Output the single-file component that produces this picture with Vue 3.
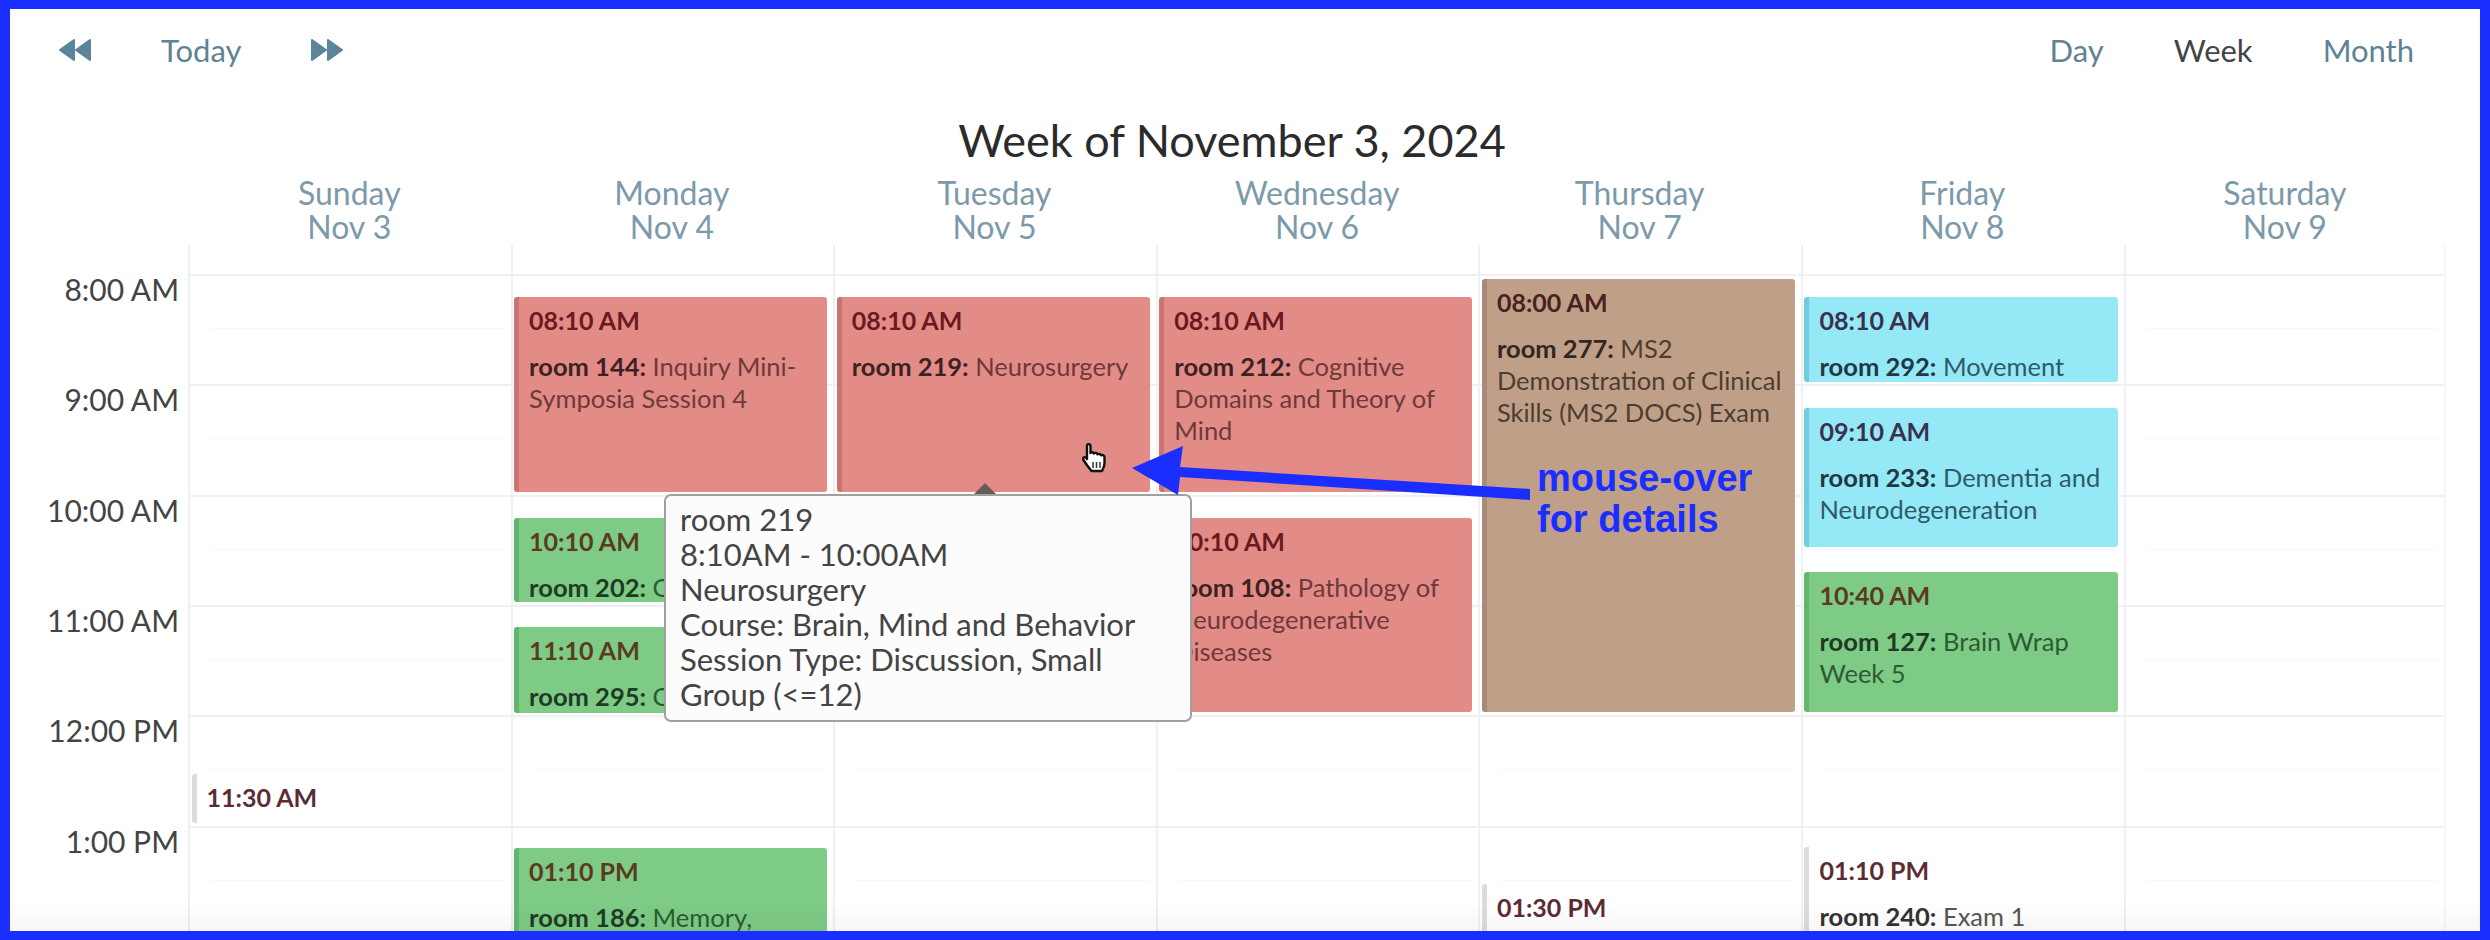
<template>
  <div class="page">
    <header class="nav">
      <div class="nav-group">
        <svg class="skip" viewBox="0 0 32 22"><path d="M1 11 15 1v20zM17 11 31 1v20z" /></svg>
        <a class="nav-link">Today</a>
        <svg class="skip" viewBox="0 0 32 22"><path d="M31 11 17 1v20zM15 11 1 1v20z" /></svg>
      </div>
      <div class="nav-group views">
        <a class="nav-link">Day</a>
        <a class="nav-link active">Week</a>
        <a class="nav-link">Month</a>
      </div>
    </header>

    <h1 class="title">Week of November 3, 2024</h1>

    <div class="head-row">
      <div></div>
      <div v-for="d in days" :key="d.name" class="day-head">
        {{ d.name }}<br />{{ d.date }}
      </div>
    </div>

    <div class="grid">
      <div class="hours">
        <div v-for="h in hours" :key="h" class="hour">{{ h }}</div>
      </div>
      <div v-for="d in days" :key="d.name" class="col">
        <div v-for="s in 7" :key="s" class="slot"></div>
        <div
          v-for="e in d.events"
          :key="e.time"
          class="event"
          :class="e.kind"
          :style="{ top: e.top + 'px', height: e.height + 'px' }"
        >
          <div class="time">{{ e.time }}</div>
          <div v-if="e.room" class="desc"><b>room {{ e.room }}:</b> {{ e.title }}</div>
        </div>
      </div>
    </div>

    <!-- hover tooltip -->
    <div class="tooltip">
      <span class="tip-arrow"></span>
      room 219<br />
      8:10AM - 10:00AM<br />
      Neurosurgery<br />
      Course: Brain, Mind and Behavior<br />
      Session Type: Discussion, Small Group (&lt;=12)
    </div>

    <svg class="cursor" viewBox="0 0 27 30">
      <path
        d="M5 3c0-2.500 3.500-2.500 3.500 0v7c1-1.300 3-1 3.500.5 1-1 3-.8 3.500.8 1-.8 3-.4 3.500 1 1.500-.8 3.500 0 3.500 2v6c0 3-1 5-2.500 7.700H9.500C7 25 4 21 1.500 17c-1.200-2 1-3.800 2.700-2.200L5 16z"
        fill="#fff"
        stroke="#111"
        stroke-width="2.400"
        stroke-linejoin="round"
      />
      <path d="M11 19v6M14.500 19v6M18 19v6" stroke="#333" stroke-width="1.500" fill="none" />
    </svg>

    <!-- annotation -->
    <svg class="pointer" viewBox="1132 446 408 54">
      <polygon points="1132,468 1183,446 1180,467 1530,489 1530,500 1180,477 1178,495" />
    </svg>
    <div class="note">mouse-over<br />for details</div>

    <div class="fade"></div>
  </div>
</template>

<script setup>
const hours = ['8:00 AM', '9:00 AM', '10:00 AM', '11:00 AM', '12:00 PM', '1:00 PM']

// top and height are px from the top of the day column
const days = [
  {
    name: 'Sunday',
    date: 'Nov 3',
    events: [{ time: '11:30 AM', kind: 'plain', top: 529, height: 49 }],
  },
  {
    name: 'Monday',
    date: 'Nov 4',
    events: [
      { time: '08:10 AM', room: 144, title: 'Inquiry Mini-Symposia Session 4', kind: 'red', top: 52, height: 195 },
      { time: '10:10 AM', room: 202, title: 'Cases', kind: 'green', top: 273, height: 84 },
      { time: '11:10 AM', room: 295, title: 'Cases', kind: 'green', top: 382, height: 86 },
      { time: '01:10 PM', room: 186, title: 'Memory,', kind: 'green', top: 603, height: 120 },
    ],
  },
  {
    name: 'Tuesday',
    date: 'Nov 5',
    events: [{ time: '08:10 AM', room: 219, title: 'Neurosurgery', kind: 'red', top: 52, height: 195 }],
  },
  {
    name: 'Wednesday',
    date: 'Nov 6',
    events: [
      { time: '08:10 AM', room: 212, title: 'Cognitive Domains and Theory of Mind', kind: 'red', top: 52, height: 195 },
      { time: '10:10 AM', room: 108, title: 'Pathology of Neurodegenerative Diseases', kind: 'red', top: 273, height: 194 },
    ],
  },
  {
    name: 'Thursday',
    date: 'Nov 7',
    events: [
      { time: '08:00 AM', room: 277, title: 'MS2 Demonstration of Clinical Skills (MS2 DOCS) Exam', kind: 'brown', top: 34, height: 433 },
      { time: '01:30 PM', kind: 'plain', top: 639, height: 90 },
    ],
  },
  {
    name: 'Friday',
    date: 'Nov 8',
    events: [
      { time: '08:10 AM', room: 292, title: 'Movement', kind: 'cyan', top: 52, height: 85 },
      { time: '09:10 AM', room: 233, title: 'Dementia and Neurodegeneration', kind: 'cyan', top: 163, height: 139 },
      { time: '10:40 AM', room: 127, title: 'Brain Wrap Week 5', kind: 'green', top: 327, height: 140 },
      { time: '01:10 PM', room: 240, title: 'Exam 1', kind: 'plain', top: 602, height: 120 },
    ],
  },
  { name: 'Saturday', date: 'Nov 9', events: [] },
]
</script>

<style>
html,
body {
  margin: 0;
  background: #fff;
}
</style>

<style scoped>
.page {
  position: relative;
  box-sizing: border-box;
  width: 2490px;
  height: 940px;
  overflow: hidden;
  background: #fff;
  border: solid #1a2eff;
  border-width: 9px 10px;
  font-family: Lato, "Open Sans", sans-serif;
}

.nav {
  display: flex;
  justify-content: space-between;
  align-items: center;
  height: 82px;
  padding: 0 66px 0 49px;
}

.nav-group {
  display: flex;
  align-items: center;
  gap: 70px;
}

.nav-link {
  font-size: 31px;
  color: #5f8294;
}

.nav-link.active {
  color: #444;
}

.skip {
  width: 32px;
  height: 22px;
  fill: #5b8598;
  stroke: #5b8598;
  stroke-width: 2;
  stroke-linejoin: round;
}

.title {
  margin: 23px 0 0;
  padding-right: 26px;
  font-size: 45px;
  line-height: 52px;
  font-weight: 400;
  color: #2b2b2b;
  text-align: center;
}

.head-row,
.grid {
  display: grid;
  grid-template-columns: 178px repeat(7, 322.6px);
}

.head-row {
  margin-top: 10px;
}

.day-head {
  height: 69px;
  font-size: 32px;
  line-height: 34px;
  color: #7c9aaa;
  text-align: center;
}

.hours {
  padding-top: 27px;
  padding-right: 9px;
  text-align: right;
  font-size: 30px;
  line-height: 34px;
  color: #444;
}

.hour {
  height: 110.33px;
}

.col {
  position: relative;
  height: 700px;
  padding-top: 29px;
  border-left: 2px solid #eff0f3;
  box-sizing: border-box;
}

.col:last-child {
  border-right: 2px solid #f6f6f8;
}

.slot {
  position: relative;
  box-sizing: border-box;
  height: 110.33px;
  border-top: 2px solid #f0f0f3;
}

.slot::after {
  content: "";
  position: absolute;
  left: 20px;
  right: 6px;
  top: 52px;
  border-top: 1px solid #f8f8f9;
}

.event {
  position: absolute;
  left: 1.500px;
  right: 6px;
  box-sizing: border-box;
  padding: 7px 8px 0 10px;
  overflow: hidden;
  border-left: 5px solid;
  border-radius: 3px;
  font-size: 25.500px;
  line-height: 32px;
}

.time {
  font-size: 25px;
  font-weight: 700;
  margin-bottom: 14px;
}

.desc b {
  font-weight: 700;
}

.event.red {
  background: #e38b87;
  border-color: #c97472;
  color: #6d3a3a;
}
.event.red .time {
  color: #6a1a1e;
}
.event.red b {
  color: #3c2222;
}

.event.green {
  background: #7dcb85;
  border-color: #63b56e;
  color: #2c5b33;
}
.event.green .time {
  color: #5b3a1f;
}
.event.green b {
  color: #1f3b25;
}

.event.cyan {
  background: #95e8f6;
  border-color: #70cbdb;
  color: #2f5a68;
}
.event.cyan .time {
  color: #3a3050;
}
.event.cyan b {
  color: #203845;
}

.event.brown {
  background: #bf9f88;
  border-color: #a88b77;
  color: #4e3c30;
}
.event.brown .time {
  color: #4a2020;
}
.event.brown b {
  color: #33261f;
}

.event.plain {
  background: #fff;
  border-color: #dcdcdf;
  color: #555;
}
.event.plain .time {
  color: #5c2c34;
}
.event.plain b {
  color: #333;
}

.tooltip {
  position: absolute;
  left: 654px;
  top: 485px;
  box-sizing: border-box;
  width: 528px;
  height: 228px;
  padding: 6px 44px 0 14px;
  background: #fcfcfc;
  border: 2px solid #a0a0a0;
  border-radius: 7px;
  font-size: 31px;
  line-height: 35px;
  color: #444;
}

.tip-arrow {
  position: absolute;
  left: 308px;
  top: -13px;
  border: solid transparent;
  border-width: 0 11px 11px;
  border-bottom-color: #6b5b58;
}

.cursor {
  position: absolute;
  left: 1072px;
  top: 434px;
  width: 27px;
  height: 30px;
}

.pointer {
  position: absolute;
  left: 1122px;
  top: 437px;
  width: 408px;
  height: 54px;
  fill: #1a2eff;
}

.note {
  position: absolute;
  left: 1527px;
  top: 449px;
  font-family: "Liberation Sans", Arial, sans-serif;
  font-size: 38px;
  font-weight: 700;
  line-height: 41px;
  color: #1a2eff;
}

.fade {
  position: absolute;
  left: 0;
  right: 0;
  bottom: 0;
  height: 30px;
  background: linear-gradient(rgba(0, 0, 0, 0), rgba(0, 0, 0, 0.035));
  pointer-events: none;
}
</style>
